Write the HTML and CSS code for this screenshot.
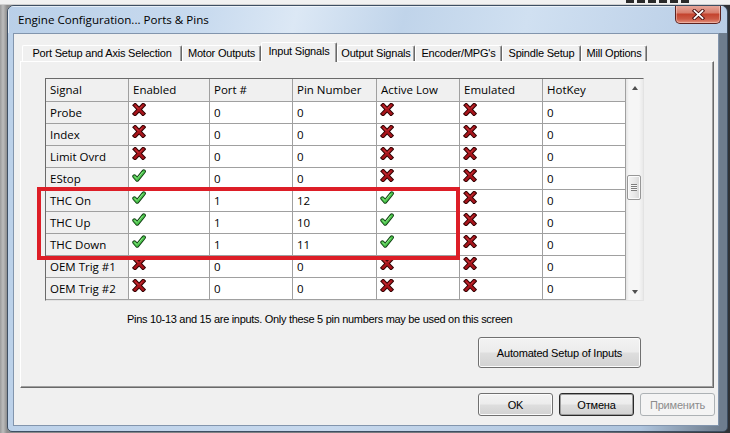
FILE: index.html
```html
<!DOCTYPE html>
<html>
<head>
<meta charset="utf-8">
<title>Engine Configuration... Ports &amp; Pins</title>
<link rel="stylesheet" href="styles.css">
</head>
<body>
<svg class="defs" width="0" height="0" aria-hidden="true">
  <defs>
    <symbol id="ix" viewBox="0 0 14 13">
      <path d="M3.2 2.4 L11 10.6 M11.2 2.2 L3 10.8" stroke="#300404" stroke-width="4.4" stroke-linecap="square" fill="none"/>
      <path d="M3.2 2.4 L11 10.6 M11.2 2.2 L3 10.8" stroke="#a8141b" stroke-width="2.5" stroke-linecap="square" fill="none"/>
      <path d="M3.4 2.8 L6.3 5.8 M10.4 2.8 L8.1 5.2" stroke="#d9494e" stroke-width="0.8" fill="none"/>
    </symbol>
    <symbol id="iv" viewBox="0 0 14 13">
      <path d="M2.4 7.4 L5.2 10.6 L11.8 2.4" stroke="#123f14" stroke-width="4.2" stroke-linejoin="round" stroke-linecap="round" fill="none"/>
      <path d="M2.4 7.4 L5.2 10.6 L11.8 2.4" stroke="#4cc64c" stroke-width="2.4" stroke-linejoin="round" stroke-linecap="round" fill="none"/>
      <path d="M2.8 7.4 L5 9.7 M6 8.6 L10.6 3" stroke="#a8eca0" stroke-width="0.8" fill="none"/>
    </symbol>
  </defs>
</svg>

<div class="desktop-top"><span class="desk-mark"></span></div>

<div class="window">
  <div class="titlebar">
    <span class="title">Engine Configuration... Ports &amp; Pins</span>
    <div class="close">
      <svg width="13" height="11" viewBox="0 0 13 11">
        <path d="M2.5 1.8 L10.5 9.2 M10.5 1.8 L2.5 9.2" stroke="#4a1010" stroke-width="3.6" stroke-linecap="square" fill="none"/>
        <path d="M2.5 1.8 L10.5 9.2 M10.5 1.8 L2.5 9.2" stroke="#ffffff" stroke-width="1.8" stroke-linecap="square" fill="none"/>
      </svg>
    </div>
  </div>

  <div class="client">
    <div class="tabctl">
      <div class="tabs">
        <div class="tab w1">Port Setup and Axis Selection</div>
        <div class="tab w2">Motor Outputs</div>
        <div class="tab w3 active">Input Signals</div>
        <div class="tab w4">Output Signals</div>
        <div class="tab w5">Encoder/MPG's</div>
        <div class="tab w6">Spindle Setup</div>
        <div class="tab w7">Mill Options</div>
      </div>
      <div class="panel">
        <div class="grid">
          <div class="cols">
            <div class="row head">
              <div class="c c1">Signal</div><div class="c c2">Enabled</div><div class="c c3">Port #</div><div class="c c4">Pin Number</div><div class="c c5">Active Low</div><div class="c c6">Emulated</div><div class="c c7">HotKey</div>
            </div>
            <div class="row">
              <div class="c c1">Probe</div><div class="c c2"><svg class="ic"><use href="#ix"/></svg></div><div class="c c3">0</div><div class="c c4">0</div><div class="c c5"><svg class="ic"><use href="#ix"/></svg></div><div class="c c6"><svg class="ic"><use href="#ix"/></svg></div><div class="c c7">0</div>
            </div>
            <div class="row">
              <div class="c c1">Index</div><div class="c c2"><svg class="ic"><use href="#ix"/></svg></div><div class="c c3">0</div><div class="c c4">0</div><div class="c c5"><svg class="ic"><use href="#ix"/></svg></div><div class="c c6"><svg class="ic"><use href="#ix"/></svg></div><div class="c c7">0</div>
            </div>
            <div class="row">
              <div class="c c1">Limit Ovrd</div><div class="c c2"><svg class="ic"><use href="#ix"/></svg></div><div class="c c3">0</div><div class="c c4">0</div><div class="c c5"><svg class="ic"><use href="#ix"/></svg></div><div class="c c6"><svg class="ic"><use href="#ix"/></svg></div><div class="c c7">0</div>
            </div>
            <div class="row">
              <div class="c c1">EStop</div><div class="c c2"><svg class="ic"><use href="#iv"/></svg></div><div class="c c3">0</div><div class="c c4">0</div><div class="c c5"><svg class="ic"><use href="#ix"/></svg></div><div class="c c6"><svg class="ic"><use href="#ix"/></svg></div><div class="c c7">0</div>
            </div>
            <div class="row">
              <div class="c c1">THC On</div><div class="c c2"><svg class="ic"><use href="#iv"/></svg></div><div class="c c3">1</div><div class="c c4">12</div><div class="c c5"><svg class="ic"><use href="#iv"/></svg></div><div class="c c6"><svg class="ic"><use href="#ix"/></svg></div><div class="c c7">0</div>
            </div>
            <div class="row">
              <div class="c c1">THC Up</div><div class="c c2"><svg class="ic"><use href="#iv"/></svg></div><div class="c c3">1</div><div class="c c4">10</div><div class="c c5"><svg class="ic"><use href="#iv"/></svg></div><div class="c c6"><svg class="ic"><use href="#ix"/></svg></div><div class="c c7">0</div>
            </div>
            <div class="row">
              <div class="c c1">THC Down</div><div class="c c2"><svg class="ic"><use href="#iv"/></svg></div><div class="c c3">1</div><div class="c c4">11</div><div class="c c5"><svg class="ic"><use href="#iv"/></svg></div><div class="c c6"><svg class="ic"><use href="#ix"/></svg></div><div class="c c7">0</div>
            </div>
            <div class="row">
              <div class="c c1">OEM Trig #1</div><div class="c c2"><svg class="ic"><use href="#ix"/></svg></div><div class="c c3">0</div><div class="c c4">0</div><div class="c c5"><svg class="ic"><use href="#ix"/></svg></div><div class="c c6"><svg class="ic"><use href="#ix"/></svg></div><div class="c c7">0</div>
            </div>
            <div class="row">
              <div class="c c1">OEM Trig #2</div><div class="c c2"><svg class="ic"><use href="#ix"/></svg></div><div class="c c3">0</div><div class="c c4">0</div><div class="c c5"><svg class="ic"><use href="#ix"/></svg></div><div class="c c6"><svg class="ic"><use href="#ix"/></svg></div><div class="c c7">0</div>
            </div>
          </div>
          <div class="vscroll">
            <div class="sb-btn"><span class="arr-up"></span></div>
            <div class="sb-track">
              <div class="thumb"><span class="grip"></span></div>
            </div>
            <div class="sb-btn"><span class="arr-down"></span></div>
          </div>
        </div>

        <div class="highlight"></div>

        <p class="note">Pins 10-13 and 15 are inputs. Only these 5 pin numbers may be used on this screen</p>
        <button class="btn auto">Automated Setup of Inputs</button>
      </div>
    </div>

    <div class="footer">
      <button class="btn fbtn">OK</button>
      <button class="btn fbtn default">Отмена</button>
      <button class="btn fbtn disabled">Применить</button>
    </div>
  </div>
</div>
</body>
</html>
```

FILE: styles.css
```css
* { box-sizing: border-box; }
html, body { margin: 0; padding: 0; }
body {
  width: 730px;
  height: 433px;
  overflow: hidden;
  position: relative;
  background: linear-gradient(to right, #9a9a9a 0, #bdbdbd 3px, #8d8d8d 7px, #6b7178 600px, #2e3135 730px);
  font-family: "Liberation Sans", Arial, sans-serif;
  font-size: 11px;
  color: #000;
}
.defs { position: absolute; width: 0; height: 0; overflow: hidden; }

.desktop-top {
  position: absolute;
  left: 0; top: 0;
  width: 730px; height: 5px;
  background: #f1f1f1;
  border-bottom: 1px solid #cfcfcf;
  overflow: hidden;
}
.desk-mark {
  position: absolute;
  left: 626px; top: 0;
  width: 64px; height: 3px;
  background: repeating-linear-gradient(to right, #2a2a2a 0 8px, transparent 8px 11px);
}

.window {
  position: absolute;
  left: 7px; top: 5px;
  width: 721px; height: 427px;
  border: 1px solid #3e4f63;
  border-radius: 7px 7px 5px 5px;
  display: flex;
  flex-direction: column;
  overflow: hidden;
  background: linear-gradient(to right, #bcd1e9 0%, #c6d8ed 45%, #aec4dd 88%, #6e7d8e 99%);
}

.titlebar {
  flex: none;
  height: 27px;
  position: relative;
  display: flex;
  align-items: center;
  padding-left: 10px;
  background: linear-gradient(104deg, #b9cfe8 0%, #c9dbef 28%, #dce8f5 40%, #c0d4ea 55%, #d0e0f1 72%, #b8cde6 100%);
  box-shadow: inset 1px 1px 0 rgba(255,255,255,0.6);
}
.title {
  font-family: "Open Sans", "Noto Sans", sans-serif;
  font-size: 11.6px;
  color: #000;
}
.close {
  position: absolute;
  top: -1px; right: 6px;
  width: 46px; height: 19px;
  border: 1px solid #5d2320;
  border-top: none;
  border-radius: 0 0 5px 5px;
  background: linear-gradient(#e9aca0 0%, #d8806f 42%, #c4442f 52%, #cc5a45 78%, #e4937f 100%);
  box-shadow: inset 0 0 0 1px rgba(255,220,210,0.45);
  display: flex;
  align-items: center;
  justify-content: center;
}

.client {
  flex: 1;
  margin: 0 8px 5px 5px;
  border: 1px solid #8295ad;
  background: #f0f0f0;
  display: flex;
  flex-direction: column;
}

.tabctl {
  margin: 0 4px 0 6px;
  display: flex;
  flex-direction: column;
}
.tabs {
  height: 27px;
  display: flex;
  align-items: flex-end;
  padding-left: 2px;
}
.tab {
  height: 16px;
  line-height: 14px;
  text-align: center;
  white-space: nowrap;
  letter-spacing: -0.2px;
  border-top: 1px solid #ffffff;
  border-left: 1px solid #ffffff;
  border-right: 1px solid #696969;
  border-radius: 2px 2px 0 0;
  box-shadow: inset -1px 0 0 #a0a0a0;
  background: #f0f0f0;
}
.tab.active {
  height: 20px;
  line-height: 17px;
  margin-bottom: -1px;
  position: relative;
  z-index: 1;
}
.w1 { width: 160px; }
.w2 { width: 79px; }
.w3 { width: 76px; }
.w4 { width: 78px; }
.w5 { width: 87px; }
.w6 { width: 79px; }
.w7 { width: 66px; }

.panel {
  position: relative;
  height: 327px;
  border-top: 1px solid #ffffff;
  border-left: 1px solid #ffffff;
  border-right: 1px solid #696969;
  border-bottom: 1px solid #696969;
  box-shadow: inset -1px -1px 0 #a0a0a0;
  padding: 16px 0 0 24px;
}

.grid {
  width: 599px;
  display: flex;
  border-top: 1px solid #6a6a6a;
  border-left: 1px solid #6a6a6a;
  border-right: 1px solid #e3e3e3;
  border-bottom: 1px solid #e3e3e3;
  background: #ffffff;
  font-family: "Open Sans", "Noto Sans", sans-serif;
  font-size: 11.5px;
}
.cols { width: 580px; }
.row { display: flex; height: 22px; }
.row.head { height: 23px; }
.c {
  border-right: 1px solid #a0a0a0;
  border-bottom: 1px solid #a0a0a0;
  padding-left: 4px;
  line-height: 21px;
  white-space: nowrap;
  overflow: hidden;
  background: #ffffff;
}
.row.head .c { line-height: 22px; background: #f0f0f0; }
.c1 { width: 83px; background: #f0f0f0; }
.c2 { width: 81px; }
.c3 { width: 83px; }
.c4 { width: 84px; }
.c5 { width: 83px; }
.c6 { width: 83px; }
.c7 { width: 83px; }
.ic { display: block; width: 14px; height: 13px; margin-top: 1px; margin-left: -1px; }

.vscroll {
  width: 17px;
  display: flex;
  flex-direction: column;
  background: linear-gradient(to right, #e4e4e4 0, #f6f6f6 3px, #f6f6f6 13px, #e9e9e9 17px);
}
.sb-btn {
  height: 17px;
  display: flex;
  align-items: center;
  justify-content: center;
}
.arr-up {
  width: 0; height: 0;
  border-left: 3.5px solid transparent;
  border-right: 3.5px solid transparent;
  border-bottom: 4px solid #4f4f4f;
  margin-top: 1px;
}
.arr-down {
  width: 0; height: 0;
  border-left: 3.5px solid transparent;
  border-right: 3.5px solid transparent;
  border-top: 4px solid #4f4f4f;
}
.sb-track { flex: 1; padding-top: 79px; }
.thumb {
  width: 14px;
  height: 25px;
  margin-left: 1px;
  border: 1px solid #979797;
  border-radius: 2px;
  background: linear-gradient(to right, #f5f5f5, #e9e9e9 50%, #d8d8d8);
  box-shadow: inset 0 0 0 1px #fbfbfb;
  display: flex;
  align-items: center;
  justify-content: center;
}
.grip {
  width: 6px;
  height: 7px;
  background: repeating-linear-gradient(#7d7d7d 0 1px, #f6f6f6 1px 2px);
}

.highlight {
  position: absolute;
  left: 16px; top: 125px;
  width: 423px; height: 73px;
  border: 4px solid #dd1e27;
  pointer-events: none;
}

.note {
  margin: 11px 0 0 82px;
  line-height: 14px;
  letter-spacing: -0.3px;
  white-space: nowrap;
}

.btn {
  font-family: "Liberation Sans", Arial, sans-serif;
  font-size: 11px;
  letter-spacing: -0.2px;
  color: #000;
  padding: 0;
  border: 1px solid #707070;
  border-radius: 3px;
  background: linear-gradient(#f3f3f3 0%, #ececec 48%, #dedede 52%, #d2d2d2 100%);
  box-shadow: inset 0 0 0 1px #fbfbfb;
}
.auto {
  display: block;
  margin: 11px 0 0 433px;
  width: 163px;
  height: 31px;
}

.footer {
  display: flex;
  justify-content: flex-end;
  gap: 6px;
  padding: 5px 3px 0 0;
}
.fbtn { width: 75px; height: 23px; }
.fbtn.default {
  border-color: #2a2a2a;
  box-shadow: inset 0 0 0 1px #9c9c9c;
}
.fbtn.disabled {
  color: #8c8c8c;
  border-color: #adb2b5;
  background: #f4f4f4;
  box-shadow: none;
}
```
